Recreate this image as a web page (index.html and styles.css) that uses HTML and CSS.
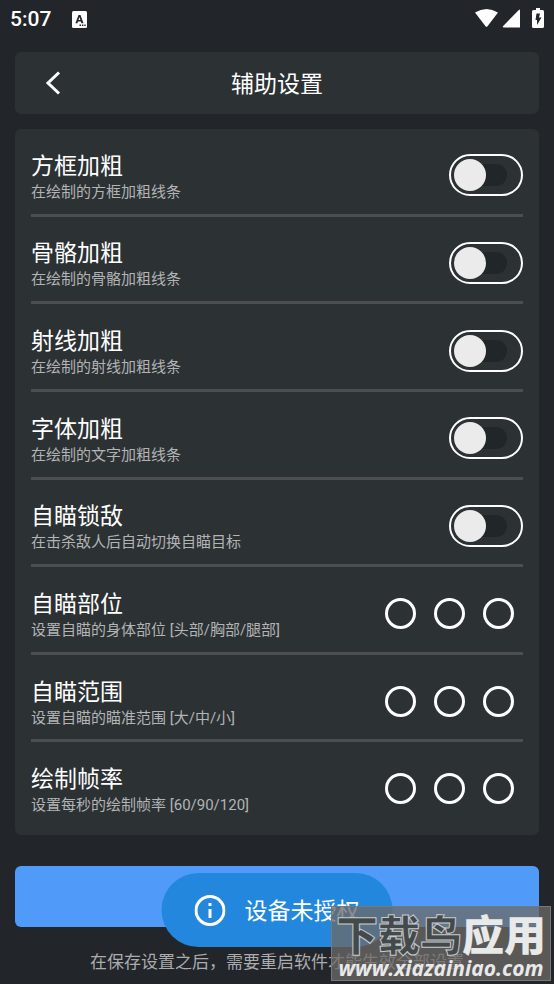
FILE: index.html
```html
<!DOCTYPE html>
<html lang="zh-CN">
<head>
<meta charset="utf-8">
<meta name="viewport" content="width=device-width, initial-scale=1">
<title>辅助设置</title>
<link rel="stylesheet" href="styles.css">
</head>
<body>
<div class="status">
  <span class="time">5:07</span>
  <svg class="app-icon" width="15" height="17" viewBox="0 0 15 17" aria-hidden="true"><rect width="15" height="17" rx="1.5" fill="#fff"/><path d="M3.4 12.2 6.500 4h2l3 8.200H9.400l-.5-1.600H6l-.6 1.600zM6.500 9h1.900l-1-3z" fill="#22252a"/><path d="M7.500 14.200h1.600M10 14.200h1.400M12.300 14.200h1.400" stroke="#22252a" stroke-width="1.4"/></svg>
  <svg class="signals" width="70" height="20" viewBox="0 0 70 20" aria-hidden="true" fill="#fff"><path d="M1 4.500Q12.500-2.500 24 4.500L13.500 18.200Q12.500 19.400 11.500 18.200z"/><path d="M46 2.200V19.500H30Q28 19.300 29.200 17.900L44.800 1.900Q46 1.100 46 2.200z"/><path d="M62 0h4v2h2.500Q70 2 70 3.500V18.500Q70 20 68.500 20H59.500Q58 20 58 18.500V3.500Q58 2 59.500 2H62z"/><path d="M62.500 5.500H66L65 9.500H67.500L63 17V12H61.500z" fill="#22252a"/></svg>
</div>
<header class="bar">
  <button class="back" type="button" aria-label="返回"><svg width="16" height="24" viewBox="0 0 16 24" fill="none" stroke="#fff" stroke-width="3"><path d="M14 1.500 3 12 14 22.500"/></svg></button>
  <h1 class="heading">辅助设置</h1>
</header>
<main class="card">
  <div class="row"><label class="text" for="s1"><span class="name">方框加粗</span><span class="note">在绘制的方框加粗线条</span></label><input class="switch" id="s1" type="checkbox"></div>
  <div class="row"><label class="text" for="s2"><span class="name">骨骼加粗</span><span class="note">在绘制的骨骼加粗线条</span></label><input class="switch" id="s2" type="checkbox"></div>
  <div class="row"><label class="text" for="s3"><span class="name">射线加粗</span><span class="note">在绘制的射线加粗线条</span></label><input class="switch" id="s3" type="checkbox"></div>
  <div class="row"><label class="text" for="s4"><span class="name">字体加粗</span><span class="note">在绘制的文字加粗线条</span></label><input class="switch" id="s4" type="checkbox"></div>
  <div class="row"><label class="text" for="s5"><span class="name">自瞄锁敌</span><span class="note">在击杀敌人后自动切换自瞄目标</span></label><input class="switch" id="s5" type="checkbox"></div>
  <div class="row" role="radiogroup" aria-labelledby="g1"><div class="text"><span class="name" id="g1">自瞄部位</span><span class="note">设置自瞄的身体部位 [头部/胸部/腿部]</span></div><div class="choices"><input type="radio" name="part" aria-label="头部"><input type="radio" name="part" aria-label="胸部"><input type="radio" name="part" aria-label="腿部"></div></div>
  <div class="row" role="radiogroup" aria-labelledby="g2"><div class="text"><span class="name" id="g2">自瞄范围</span><span class="note">设置自瞄的瞄准范围 [大/中/小]</span></div><div class="choices"><input type="radio" name="range" aria-label="大"><input type="radio" name="range" aria-label="中"><input type="radio" name="range" aria-label="小"></div></div>
  <div class="row" role="radiogroup" aria-labelledby="g3"><div class="text"><span class="name" id="g3">绘制帧率</span><span class="note">设置每秒的绘制帧率 [60/90/120]</span></div><div class="choices"><input type="radio" name="fps" aria-label="60"><input type="radio" name="fps" aria-label="90"><input type="radio" name="fps" aria-label="120"></div></div>
</main>
<button class="save" type="button" aria-label="保存设置"></button>
<p class="hint">在保存设置之后，需要重启软件才能生效全部设置</p>
<div class="toast" role="status">
  <svg width="31" height="31" viewBox="0 0 31 31" aria-hidden="true"><circle cx="15.500" cy="15.500" r="14" fill="none" stroke="#fff" stroke-width="3"/><path d="M14 8h3v3h-3zM14 14h3v9h-3z" fill="#fff"/></svg>
  <span class="toast-text">设备未授权</span>
</div>
<div class="mark">
  <span class="mark-name"><span class="mark-dark">下载鸟</span>应用</span>
  <span class="mark-url">www.xiazainiao.com</span>
</div>
</body>
</html>
```
FILE: styles.css
```css
* { box-sizing: border-box; }

body {
  position: relative;
  display: flex;
  flex-direction: column;
  min-height: 100vh;
  margin: 0;
  padding: 0 15px 10px;
  background: #22252a;
  color: #fff;
  font-family: Roboto, "Noto Sans CJK SC", sans-serif;
}

.status {
  display: flex;
  align-items: center;
  height: 38px;
  margin: 0 -5px 14px;
}
.time { font-size: 21px; font-weight: 500; line-height: 24px; }
.app-icon { margin-left: 21px; }
.signals { margin-left: auto; margin-bottom: 2px; }

.bar {
  display: grid;
  grid-template-columns: 60px 1fr 60px;
  align-items: center;
  height: 62px;
  margin-bottom: 15px;
  border-radius: 6px;
  background: #2c3134;
}
.back {
  display: grid;
  justify-content: end;
  align-items: center;
  height: 62px;
  padding: 0 14px;
  border: 0;
  background: none;
}
.heading {
  margin: 0;
  padding-top: 4px;
  font-size: 23px;
  font-weight: 400;
  line-height: 30px;
  text-align: center;
}

.card {
  display: grid;
  flex: 1;
  grid-auto-rows: 1fr;
  padding: 0 16px 5px;
  border-radius: 6px;
  background: #2c3134;
}
.row {
  display: flex;
  align-items: center;
  justify-content: space-between;
  padding-top: 8px;
  border-bottom: 3px solid #4d4e50;
}
.row:last-child { border-color: transparent; }
.text { display: flex; flex-direction: column; padding-top: 5px; }
.name { font-size: 23px; line-height: 28px; }
.note { color: #b2b4b5; font-size: 15px; line-height: 22px; }

.switch {
  display: grid;
  align-items: center;
  appearance: none;
  width: 74px;
  height: 42px;
  margin: 0;
  padding: 0 3px;
  border: 2px solid #fff;
  border-radius: 21px;
}
.switch::before,
.switch::after { content: ""; grid-area: 1 / 1; }
.switch::before {
  width: 42px;
  height: 22px;
  margin-left: 11px;
  border-radius: 11px;
  background: #212629;
}
.switch::after {
  width: 32px;
  height: 32px;
  border-radius: 50%;
  background: #ebebeb;
}
.switch:checked::after { justify-self: end; }

.choices { display: flex; gap: 18px; margin-right: 9px; }
.choices input {
  appearance: none;
  width: 31px;
  height: 31px;
  margin: 0;
  border: 3px solid #fff;
  border-radius: 50%;
}
.choices input:checked { background: #509bfa; }

.save {
  height: 61px;
  margin-top: 31px;
  border: 0;
  border-radius: 6px;
  background: #509bfa;
}
.hint {
  margin: 23px 0 0;
  color: #aaacae;
  font-size: 17px;
  line-height: 24px;
  text-align: center;
}

.toast {
  position: absolute;
  bottom: 37px;
  left: 50%;
  display: flex;
  align-items: center;
  gap: 19px;
  height: 74px;
  padding: 0 33px;
  border-radius: 37px;
  background: #2388dd;
  font-size: 23px;
  line-height: 30px;
  white-space: nowrap;
  transform: translateX(-50%);
}
.toast-text { padding-top: 4px; }

.mark {
  position: absolute;
  right: 3px;
  bottom: 3px;
  display: flex;
  flex-direction: column;
  align-items: center;
  gap: 2px;
  width: 220px;
  height: 75px;
  padding-top: 4px;
  border: 1px solid #77787a;
  background: rgba(108, 106, 102, 0.76);
  color: #e8e9e9;
  white-space: nowrap;
}
.mark-name {
  font-family: "Noto Sans CJK SC", sans-serif;
  font-size: 42px;
  font-style: oblique 6deg;
  font-weight: 900;
  line-height: 44px;
}
.mark-dark {
  color: #44494c;
  -webkit-text-stroke: 1px #c5cacd;
}
.mark-url {
  font-family: "Open Sans", sans-serif;
  font-size: 21px;
  font-style: italic;
  font-weight: 700;
  line-height: 22px;
}
```
